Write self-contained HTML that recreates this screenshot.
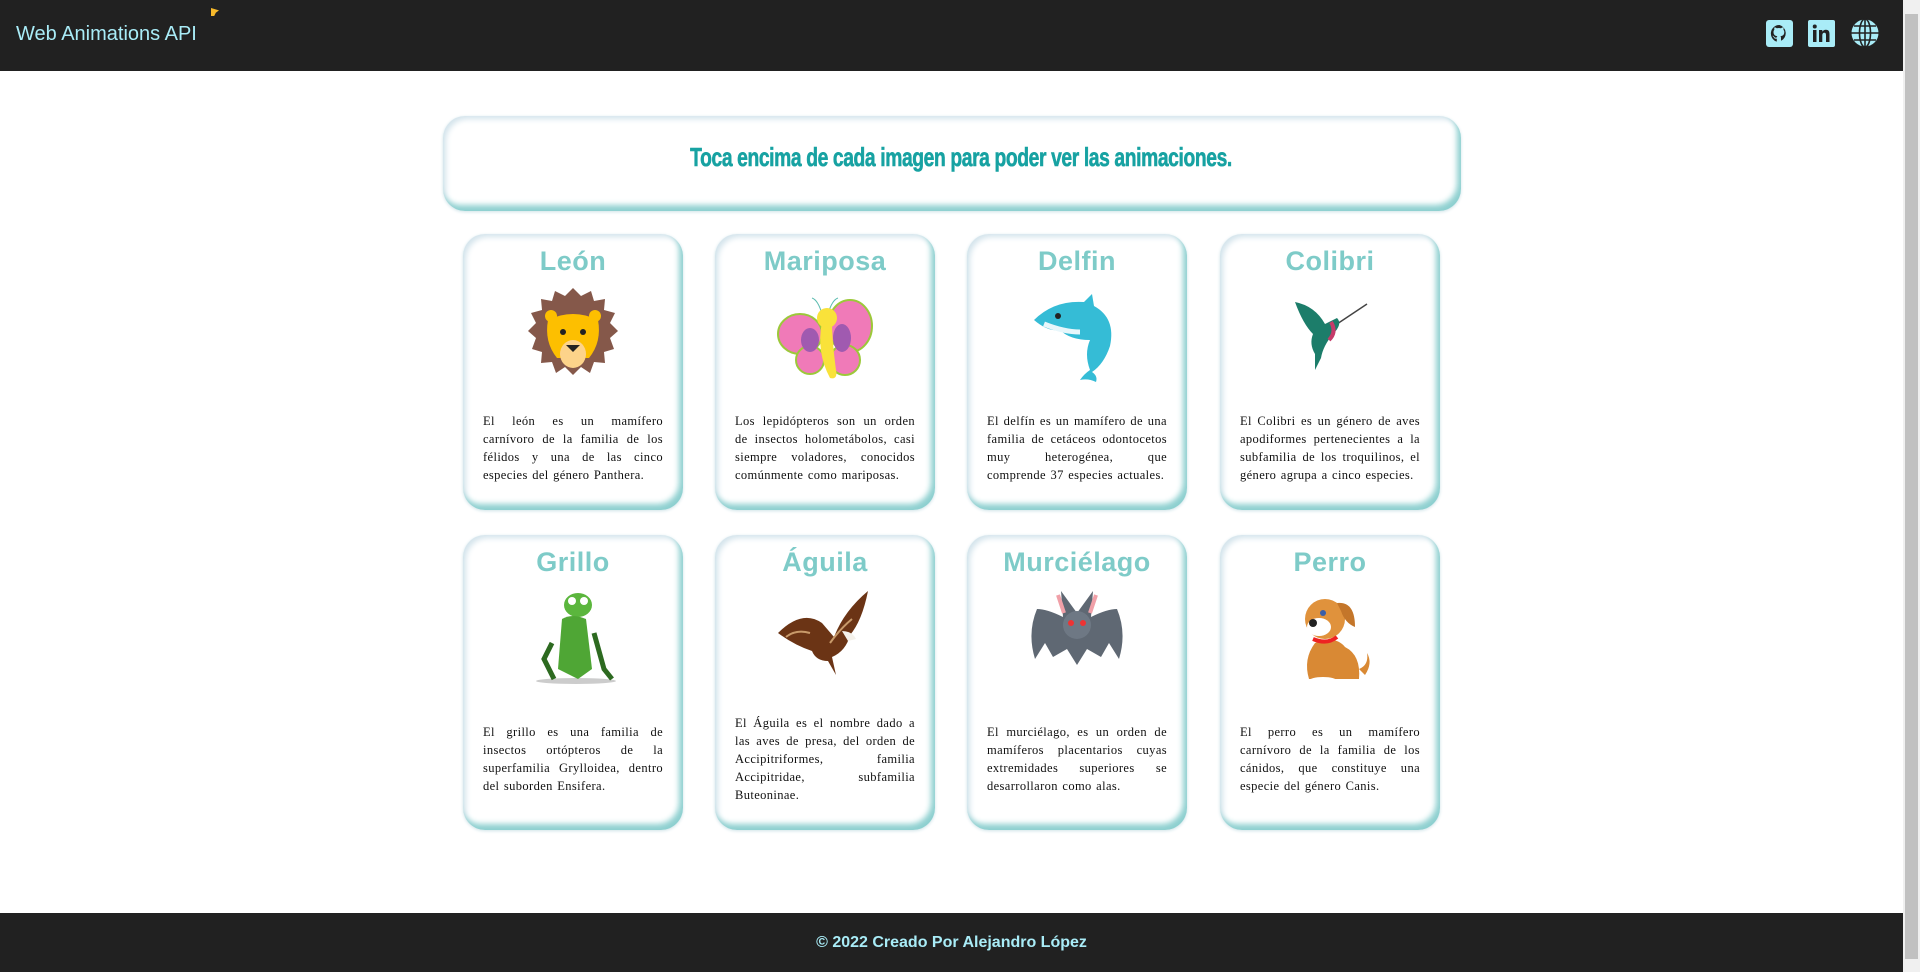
<!DOCTYPE html>
<html><head><meta charset="utf-8"><style>
*{box-sizing:border-box;margin:0;padding:0}
html,body{width:1920px;height:972px;overflow:hidden;background:#fff;font-family:"Liberation Sans",sans-serif}
.sb{position:absolute;left:1903px;top:0;width:17px;height:972px;background:#f0f0f0}
.sb i{position:absolute;left:2px;top:14px;width:13px;height:945px;background:#c1c1c1}
header{position:absolute;left:0;top:0;width:1903px;height:71px;background:#212121}
header .t{position:absolute;left:16px;top:23px;font-size:20px;color:#a9ecf7}
.flag{position:absolute;left:211px;top:8px;width:8px;height:8px;background:#f6b92b;clip-path:polygon(0 0,100% 30%,60% 60%,40% 100%,0 100%)}
.ic{position:absolute;top:20px}
.banner{position:absolute;left:443px;top:116px;width:1018px;height:95px;border-radius:22px;background:#fff;box-shadow:inset -4px -6px 6px #8ed0d0,inset 3px 3px 6px #d4e4ec,0 1px 3px #cfe3e8;display:flex;align-items:center;justify-content:center}
.banner span{font-family:"Liberation Sans Narrow","Liberation Sans",sans-serif;font-weight:bold;font-size:26px;color:#17a2a2;transform:scaleX(.74);letter-spacing:-0.5px;margin-top:-12px;margin-left:18px;-webkit-text-stroke:0.6px #17a2a2;white-space:nowrap}
.card{position:absolute;width:220px;border-radius:22px;background:#fff;box-shadow:inset -4px -6px 6px #8ed0d0,inset 3px 3px 6px #d4e4ec,0 1px 3px #cfe3e8;display:flex;flex-direction:column;align-items:center}
.card h2{font-size:27px;font-weight:bold;color:#7ecbc8;margin-top:10px;height:34px;line-height:34px;letter-spacing:0.5px}
.card svg.a{width:110px;height:110px;margin-top:4px}
.card .tx{flex:1;display:flex;align-items:center;padding:6px 20px 12px 20px}
.card p{font-family:"Liberation Serif",serif;font-size:12.5px;letter-spacing:0.38px;word-spacing:1px;line-height:18px;text-align:justify;color:#111}
.r1{top:234px;height:276px}.r2{top:535px;height:295px}
.c1{left:463px}.c2{left:715px}.c3{left:967px}.c4{left:1220px}
footer{position:absolute;left:0;top:913px;width:1903px;height:59px;background:#212121;display:flex;align-items:center;justify-content:center;color:#a9ecf7;font-weight:bold;font-size:16px}
</style></head><body>
<header><div class="t">Web Animations API</div><div class="flag"></div>
<svg class="ic" style="left:1766px" width="27" height="27" viewBox="0 0 27 27"><rect width="27" height="27" rx="3" fill="#a9ecf7"/><path d="M13.5 5a8.5 8.5 0 0 0-2.7 16.6v-3c-2.4.5-2.9-1-2.9-1-.4-1-1-1.3-1-1.3-.8-.5 0-.5 0-.5.9.1 1.3.9 1.3.9.8 1.3 2 1 2.6.7.1-.6.3-1 .6-1.2-1.9-.2-3.9-1-3.9-4.2 0-.9.3-1.7.9-2.3-.1-.2-.4-1.1.1-2.3 0 0 .7-.2 2.3.9a8 8 0 0 1 4.2 0c1.6-1.1 2.3-.9 2.3-.9.5 1.2.2 2.1.1 2.3.5.6.9 1.4.9 2.3 0 3.3-2 4-3.9 4.2.3.3.6.8.6 1.6v3A8.5 8.5 0 0 0 13.5 5z" fill="#222"/></svg>
<svg class="ic" style="left:1808px" width="27" height="27" viewBox="0 0 27 27"><rect width="27" height="27" rx="2" fill="#a9ecf7"/><rect x="5" y="10" width="3.5" height="12" fill="#222"/><circle cx="6.75" cy="6.5" r="2" fill="#222"/><path d="M11 10h3.3v1.7c.6-1.1 1.9-2 3.6-2 3 0 3.6 2 3.6 4.6V22H18v-6.7c0-1.5-.3-2.5-1.7-2.5s-2 1-2 2.5V22H11z" fill="#222"/></svg>
<svg class="ic" style="left:1850px;top:18px" width="30" height="30" viewBox="0 0 30 30"><circle cx="15" cy="15" r="14" fill="#a9ecf7" stroke="#222" stroke-width="1"/><g fill="none" stroke="#222" stroke-width="1.6"><ellipse cx="15" cy="15" rx="5.5" ry="14"/><line x1="15" y1="1" x2="15" y2="29"/><line x1="1" y1="15" x2="29" y2="15"/><path d="M4 8h22M4 22h22"/></g></svg>
</header>
<div class="sb"><i></i></div>
<div class="banner"><span>Toca encima de cada imagen para poder ver las animaciones.</span></div>

<div class="card r1 c1"><h2>León</h2>
<svg class="a" viewBox="0 0 110 110"><path d="M55 6l8 8 10-5 3 10 11-2-1 11 11 3-5 10 8 8-8 7 4 11-10 3 1 11-11-1-4 11-9-6-8 8-8-8-9 6-4-11-11 1 1-11-10-3 4-11-8-7 8-8-5-10 11-3-1-11 11 2 3-10 10 5z" fill="#85584a"/><path d="M30 38q25-12 50 0 4 22-9 38H39Q26 60 30 38z" fill="#fdbf00"/><circle cx="33" cy="34" r="6" fill="#fdbf00"/><circle cx="77" cy="34" r="6" fill="#fdbf00"/><ellipse cx="55" cy="72" rx="13" ry="14" fill="#fdd38a"/><circle cx="45" cy="50" r="3" fill="#222"/><circle cx="65" cy="50" r="3" fill="#222"/><path d="M48 63h14l-7 7z" fill="#222"/></svg>
<div class="tx"><p>El león es un mamífero carnívoro de la familia de los félidos y una de las cinco especies del género Panthera.</p></div></div>

<div class="card r1 c2"><h2>Mariposa</h2>
<svg class="a" viewBox="0 0 110 110"><path d="M52 32q-4-14-10-16M58 32q4-14 10-16" stroke="#5cbcb0" fill="none"/><ellipse cx="30" cy="52" rx="22" ry="20" fill="#f07ab8" stroke="#9cc83a" stroke-width="2"/><ellipse cx="80" cy="44" rx="22" ry="26" fill="#f07ab8" stroke="#9cc83a" stroke-width="2"/><ellipse cx="40" cy="78" rx="14" ry="14" fill="#f07ab8" stroke="#9cc83a" stroke-width="2"/><ellipse cx="75" cy="78" rx="15" ry="15" fill="#f07ab8" stroke="#9cc83a" stroke-width="2"/><ellipse cx="40" cy="58" rx="9" ry="12" fill="#a05ab0"/><ellipse cx="72" cy="56" rx="9" ry="14" fill="#a05ab0"/><path d="M52 40q-6 30 8 56q8 2 6-8-4-30-4-48z" fill="#f9e23a"/><circle cx="57" cy="36" r="10" fill="#f9e23a"/></svg>
<div class="tx"><p>Los lepidópteros son un orden de insectos holometábolos, casi siempre voladores, conocidos comúnmente como mariposas.</p></div></div>

<div class="card r1 c3"><h2>Delfin</h2>
<svg class="a" viewBox="0 0 110 110"><path d="M12 38q20-20 50-18l8-8 2 12q22 12 16 40-6 18-18 26 6 4 4 10-8-4-16-2 4-6 10-10-6-16 0-30-20 0-30-10-12 2-26-10z" fill="#35bcd6"/><path d="M22 42q20 8 36 8" stroke="#e8f7fb" stroke-width="5" fill="none"/><circle cx="36" cy="34" r="3" fill="#222"/></svg>
<div class="tx"><p>El delfín es un mamífero de una familia de cetáceos odontocetos muy heterogénea, que comprende 37 especies actuales.</p></div></div>

<div class="card r1 c4"><h2>Colibri</h2>
<svg class="a" viewBox="0 0 110 110"><path d="M92 22L62 42" stroke="#444" stroke-width="1.5"/><path d="M20 20q20 4 30 22l12-6q6 6-4 16-10 12-12 24l-6 12 0-16q-6-10-2-20-10-10-18-32z" fill="#1c7d6a"/><path d="M56 40q6 10-2 18" stroke="#c53b6a" stroke-width="4" fill="none"/></svg>
<div class="tx"><p>El Colibri es un género de aves apodiformes pertenecientes a la subfamilia de los troquilinos, el género agrupa a cinco especies.</p></div></div>

<div class="card r2 c1"><h2>Grillo</h2>
<svg class="a" viewBox="0 0 110 110"><ellipse cx="58" cy="98" rx="40" ry="3" fill="#ccc"/><ellipse cx="60" cy="22" rx="14" ry="12" fill="#5bb63d"/><path d="M44 36q10-6 24 0l6 50-14 10-20-10z" fill="#4fa635"/><path d="M34 60l-8 16 10 20M76 50l10 36 8 10" stroke="#2d6a20" stroke-width="5" fill="none"/><circle cx="54" cy="18" r="4" fill="#fff"/><circle cx="66" cy="18" r="4" fill="#fff"/></svg>
<div class="tx"><p>El grillo es una familia de insectos ortópteros de la superfamilia Grylloidea, dentro del suborden Ensifera.</p></div></div>

<div class="card r2 c2"><h2>Águila</h2>
<svg class="a" viewBox="0 0 110 110"><path d="M8 50q24-24 44-10l12 14q10-26 34-46-6 30-18 44-4 16-18 22l4 18-8-14q-12 0-16-10-18-6-34-18z" fill="#6b3415"/><path d="M72 48q10 0 14 8l-8 2z" fill="#f4f1ea"/><path d="M40 50q-14-4-24 4M60 60q10-14 22-24" stroke="#c89a6a" stroke-width="2" fill="none"/></svg>
<div class="tx"><p>El Águila es el nombre dado a las aves de presa, del orden de Accipitriformes, familia Accipitridae, subfamilia Buteoninae.</p></div></div>

<div class="card r2 c3"><h2>Murciélago</h2>
<svg class="a" viewBox="0 0 110 110"><path d="M55 30l-16-22 2 26q-16-8-26-8-10 24-2 50l10-16 8 14 14-8 10 16 10-16 14 8 8-14 10 16q8-26-2-50-10 0-26 8l2-26z" fill="#5f6873"/><circle cx="55" cy="42" r="14" fill="#6e7884"/><circle cx="49" cy="40" r="3" fill="#e33"/><circle cx="61" cy="40" r="3" fill="#e33"/><path d="M36 12l6 18M74 12l-6 18" stroke="#f0a0a8" stroke-width="4"/></svg>
<div class="tx"><p>El murciélago, es un orden de mamíferos placentarios cuyas extremidades superiores se desarrollaron como alas.</p></div></div>

<div class="card r2 c4"><h2>Perro</h2>
<svg class="a" viewBox="0 0 110 110"><path d="M40 60q20-8 30 4 16 8 14 32H34q-6-20 6-36z" fill="#d98934"/><path d="M84 86q10-4 8-16 6 10-2 22z" fill="#d98934"/><circle cx="50" cy="36" r="20" fill="#e0923c"/><path d="M62 20q18-2 18 24-10-4-14-16z" fill="#c4762a"/><ellipse cx="44" cy="44" rx="12" ry="9" fill="#fff"/><circle cx="38" cy="40" r="4" fill="#222"/><circle cx="48" cy="30" r="3" fill="#3a5ea8"/><path d="M38 56q14 6 24-2" stroke="#e22" stroke-width="4" fill="none"/><ellipse cx="48" cy="98" rx="14" ry="4" fill="#fff"/></svg>
<div class="tx"><p>El perro es un mamífero carnívoro de la familia de los cánidos, que constituye una especie del género Canis.</p></div></div>

<footer>© 2022 Creado Por Alejandro López</footer>
</body></html>
